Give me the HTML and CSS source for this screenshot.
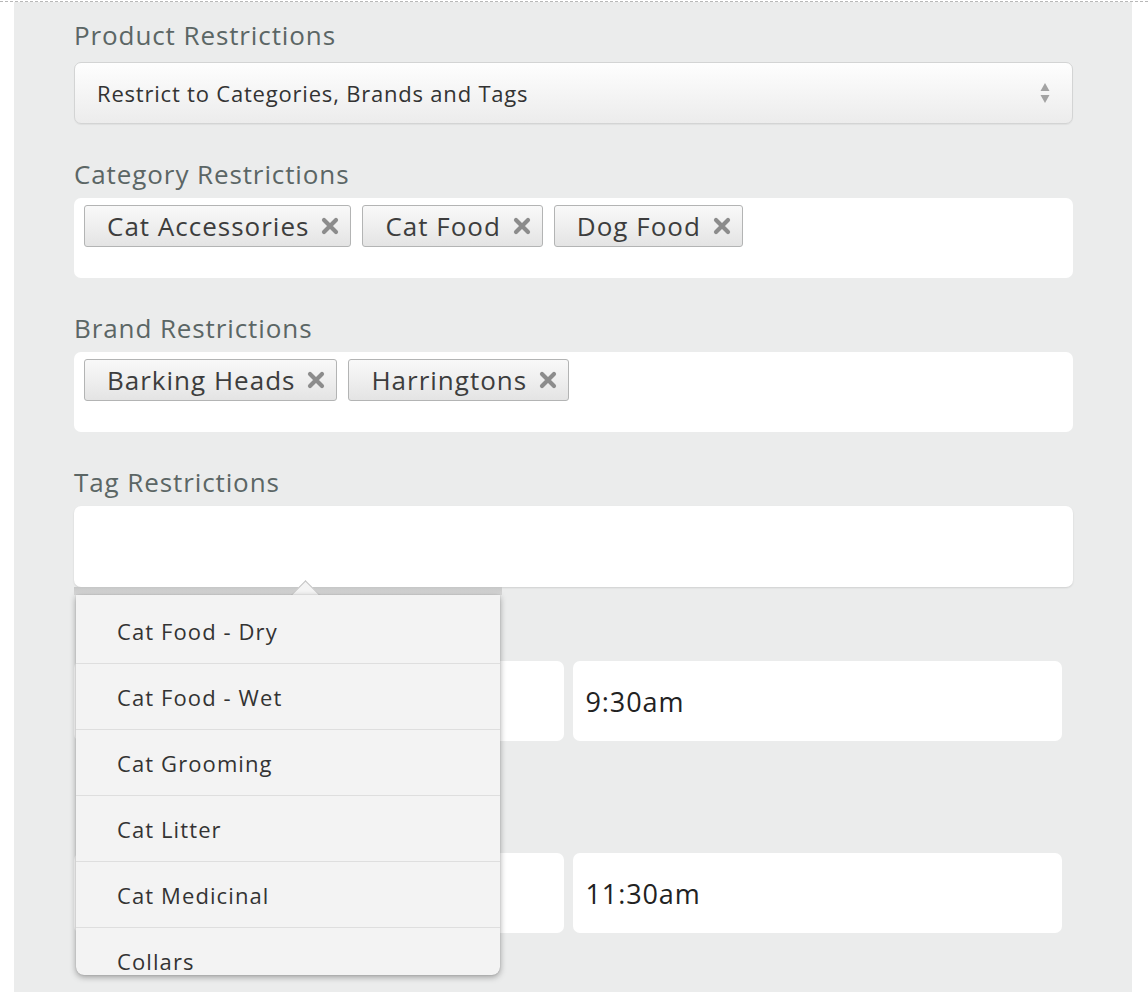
FILE: index.html
```html
<!DOCTYPE html>
<html>
<head>
<meta charset="utf-8">
<link rel="stylesheet" href="styles.css">
</head>
<body>
<div class="page">
  <div class="panel">
    <div class="field first">
      <div class="label">Product Restrictions</div>
      <div class="select">
        <span>Restrict to Categories, Brands and Tags</span>
        <svg class="arrows" width="12" height="24" viewBox="0 0 12 24"><path d="M6 2 L10.5 10 L1.5 10 Z" fill="#a3a3a3"/><path d="M6 22 L10.5 14 L1.5 14 Z" fill="#a3a3a3"/></svg>
      </div>
    </div>

    <div class="field">
      <div class="label">Category Restrictions</div>
      <div class="tagbox">
        <span class="tag">Cat Accessories<svg class="x" width="18" height="18" viewBox="0 0 18 18"><path d="M3 3 L15 15 M15 3 L3 15" stroke="#8c8c8c" stroke-width="4.2" stroke-linecap="round"/></svg></span>
        <span class="tag">Cat Food<svg class="x" width="18" height="18" viewBox="0 0 18 18"><path d="M3 3 L15 15 M15 3 L3 15" stroke="#8c8c8c" stroke-width="4.2" stroke-linecap="round"/></svg></span>
        <span class="tag">Dog Food<svg class="x" width="18" height="18" viewBox="0 0 18 18"><path d="M3 3 L15 15 M15 3 L3 15" stroke="#8c8c8c" stroke-width="4.2" stroke-linecap="round"/></svg></span>
      </div>
    </div>

    <div class="field">
      <div class="label">Brand Restrictions</div>
      <div class="tagbox">
        <span class="tag">Barking Heads<svg class="x" width="18" height="18" viewBox="0 0 18 18"><path d="M3 3 L15 15 M15 3 L3 15" stroke="#8c8c8c" stroke-width="4.2" stroke-linecap="round"/></svg></span>
        <span class="tag">Harringtons<svg class="x" width="18" height="18" viewBox="0 0 18 18"><path d="M3 3 L15 15 M15 3 L3 15" stroke="#8c8c8c" stroke-width="4.2" stroke-linecap="round"/></svg></span>
      </div>
    </div>

    <div class="field tagfield">
      <div class="label">Tag Restrictions</div>
      <div class="tagbox focus"></div>
      <div class="popover">
        <div class="pointer"></div>
        <ul class="menu">
          <li>Cat Food - Dry</li>
          <li>Cat Food - Wet</li>
          <li>Cat Grooming</li>
          <li>Cat Litter</li>
          <li>Cat Medicinal</li>
          <li>Collars</li>
        </ul>
      </div>
    </div>

    <div class="field">
      <div class="label"></div>
      <div class="timerow">
        <div class="input"></div>
        <div class="input">9:30am</div>
      </div>
    </div>

    <div class="field last">
      <div class="label"></div>
      <div class="timerow">
        <div class="input"></div>
        <div class="input">11:30am</div>
      </div>
    </div>
  </div>
</div>
</body>
</html>
```

FILE: styles.css
```css
html, body {
  margin: 0;
  padding: 0;
  background: #ffffff;
}

body {
  font-family: "Open Sans", Lato, sans-serif;
  height: 1002px;
  overflow: hidden;
}

.page {
  border-top: 1px dashed #b8b8b8;
  margin-top: 1px;
}

.panel {
  margin: 0 16px 0 14px;
  background: #ebecec;
  padding: 15px 59px 0 60px;
  height: 975px;
}

.field {
  margin-bottom: 32px;
}

.label {
  font-size: 26px;
  line-height: 36px;
  height: 36px;
  color: #5b6665;
  margin-bottom: 6px;
  letter-spacing: 0.9px;
  white-space: nowrap;
}

.field.first .label {
  margin-bottom: 9px;
}

.select {
  height: 62px;
  box-sizing: border-box;
  border: 1px solid #d3d4d4;
  border-radius: 7px;
  background: linear-gradient(#fefefe, #ececec);
  box-shadow: 0 1px 1px rgba(0, 0, 0, 0.05);
  display: flex;
  align-items: center;
  justify-content: space-between;
  padding: 0 21px 0 22px;
  font-size: 22px;
  letter-spacing: 0.8px;
  color: #333;
}

.arrows {
  display: block;
}

.tagbox {
  background: #fff;
  border-radius: 7px;
  height: 80px;
  box-sizing: border-box;
  padding: 7px 10px;
  display: flex;
  align-items: flex-start;
  gap: 11px;
}

.tag {
  height: 42px;
  box-sizing: border-box;
  border: 1px solid #b3b4b4;
  border-radius: 3px;
  background: linear-gradient(#f9f9f9, #e4e4e4);
  display: inline-flex;
  align-items: center;
  padding: 0 11px 0 22px;
  font-size: 26px;
  letter-spacing: 1px;
  color: #3d3d3d;
  white-space: nowrap;
}

.tag .x {
  margin-left: 12px;
  display: block;
}

.tagfield {
  position: relative;
}

.tagbox.focus {
  height: 81px;
  box-shadow: 0 1px 2px rgba(0, 0, 0, 0.12);
}

.popover {
  position: absolute;
  left: 2px;
  top: 123px;
  width: 424px;
  z-index: 5;
}

.pointer {
  position: absolute;
  left: 218px;
  top: -2px;
  width: 22px;
  height: 22px;
  background: #f4f4f4;
  transform: rotate(45deg);
  border-top: 1px solid #c4c4c4;
  border-left: 1px solid #c4c4c4;
  z-index: 2;
}

.popover::before {
  content: "";
  display: block;
  height: 8px;
  margin: 0 -2px;
  background: linear-gradient(#c6c7c7, #d9d9d9);
}

.menu {
  list-style: none;
  margin: 0;
  padding: 3px 0 0;
  height: 377px;
  overflow: hidden;
  background: #f3f3f3;
  border-radius: 0 0 8px 8px;
  box-shadow: 0 2px 6px rgba(0, 0, 0, 0.35), 0 0 1px rgba(0, 0, 0, 0.3);
  position: relative;
  z-index: 3;
}

.menu li {
  height: 66px;
  box-sizing: border-box;
  border-bottom: 1px solid #dedede;
  display: flex;
  align-items: center;
  padding-left: 41px;
  font-size: 22px;
  letter-spacing: 1.1px;
  color: #333;
}

.timerow {
  display: flex;
  gap: 9px;
  width: 988px;
}

.input {
  flex: 1;
  height: 80px;
  background: #fff;
  border-radius: 7px;
  display: flex;
  align-items: center;
  padding-left: 13px;
  font-size: 27px;
  letter-spacing: 0.9px;
  color: #222;
}

.field.last {
  margin-top: 70px;
}
```
